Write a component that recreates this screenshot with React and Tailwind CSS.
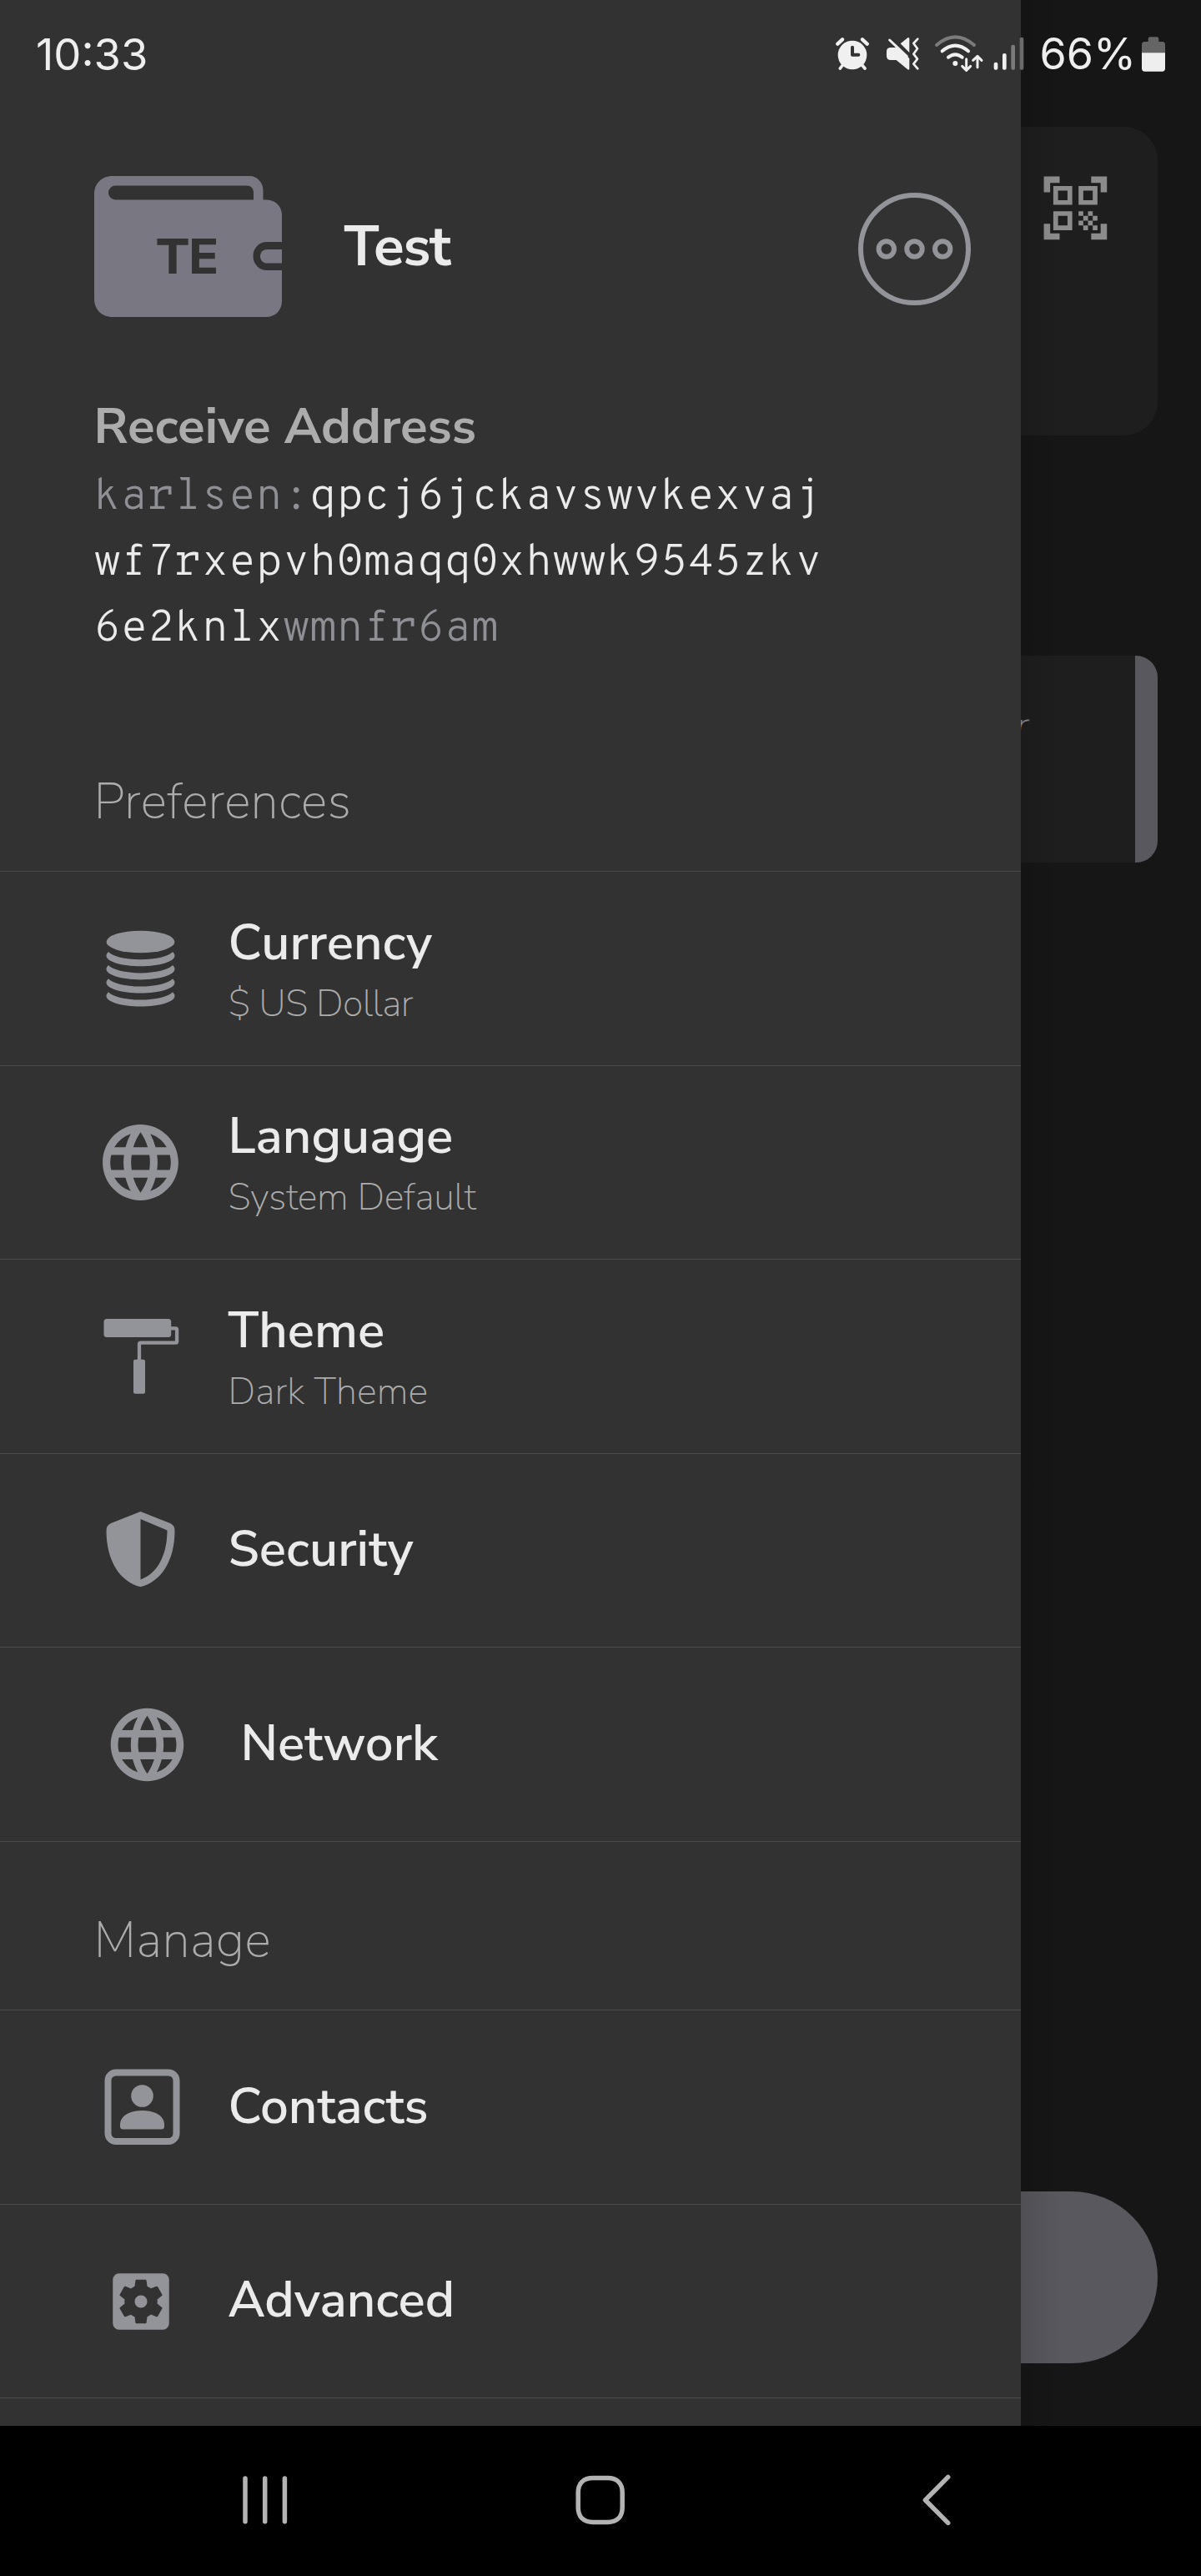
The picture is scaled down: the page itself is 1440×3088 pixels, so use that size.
import { MdLanguage, MdQrCodeScanner, MdSettingsApplications } from 'react-icons/md';

function WalletIcon() {
  return (
    <div className="relative flex h-[169px] w-[225px] shrink-0 items-center justify-center">
      <svg className="absolute inset-0" width="225" height="169" viewBox="0 0 225 169">
        <path
          fill="#797882"
          fillRule="evenodd"
          d="M22 0H186C195 0 202.500 7.500 202.500 17V28.500H206C217 28.500 225 36 225 47V79H207C197.500 79 190.500 86.500 190.500 96S197.500 113 207 113H225V150C225 161 217 169 206 169H22C9 169 0 160 0 147V22C0 9 9 0 22 0ZM25.500 11.500A8.500 8.500 0 0 0 25.500 28.500H191V20C191 15 188 11.500 183 11.500Z"
        />
        <path fill="#797882" d="M225 88H207.500C202.500 88 199 91.500 199 96.200S202.500 104.500 207.500 104.500H225Z" />
      </svg>
      <span className="relative pt-6 text-[60px] font-extrabold leading-[82px] text-[#323232]">TE</span>
    </div>
  );
}

function MoreButton() {
  return (
    <svg className="mt-1.5 shrink-0" width="135" height="135" viewBox="0 0 135 135" fill="none" stroke="#93939a" strokeWidth="6">
      <circle cx="67.500" cy="67.500" r="64.500" />
      <circle cx="33.800" cy="67.500" r="9.200" />
      <circle cx="67.500" cy="67.500" r="9.200" />
      <circle cx="101.200" cy="67.500" r="9.200" />
    </svg>
  );
}

function IconFrame({ children }) {
  return (
    <svg className="shrink-0" width="112.5" height="112.5" viewBox="0 0 112.5 112.5" fill="#93939a">
      {children}
    </svg>
  );
}

function CoinsIcon() {
  return (
    <IconFrame>
      <ellipse cx="55.500" cy="24" rx="41" ry="13.300" />
      {[0, 16.1, 32.2, 48.3].map((dy) => (
        <path
          key={dy}
          transform={`translate(0 ${dy})`}
          d="M17 36C14.500 38.500 14.500 40 14.500 40.500C14.500 48 33 53.300 55.500 53.300S96.500 48 96.500 40.500C96.500 40 96.500 38.500 94 36C89 41.500 74 45.300 55.500 45.300S22 41.500 17 36Z"
        />
      ))}
    </IconFrame>
  );
}

function RollerIcon() {
  return (
    <IconFrame>
      <rect x="11.500" y="11" width="80.700" height="22" rx="3.500" />
      <path d="M92 22.300H97.500Q99.100 22.300 99.100 24V38Q99.100 39.700 97.500 39.700H56Q54 39.700 54 41.500V60" fill="none" stroke="#93939a" strokeWidth="4.300" />
      <rect x="47" y="59.800" width="14" height="41" rx="2" />
    </IconFrame>
  );
}

function ShieldIcon() {
  return (
    <IconFrame>
      <path
        fillRule="evenodd"
        d="M55.500 10L91 24Q96.500 26.500 96.500 33C96.500 69 80 94.500 55.500 100.200C31 94.500 14.500 69 14.500 33Q14.500 26.500 20 24ZM55.500 19V91.500C75 85 87.500 63 87.500 32.500Z"
      />
    </IconFrame>
  );
}

function ContactsIcon() {
  return (
    <IconFrame>
      <rect x="16.500" y="14.500" width="82" height="82.500" rx="9.500" fill="none" stroke="#93939a" strokeWidth="8" />
      <circle cx="57.500" cy="42.500" r="13.300" />
      <path d="M31 77C31 66 43 60 57.500 60S84 66 84 77V79Q84 82.500 80.500 82.500H34.500Q31 82.500 31 79Z" />
    </IconFrame>
  );
}

const GlobeIcon = () => <MdLanguage className="size-[109px] shrink-0 text-[#93939a]" />;
const NetworkIcon = () => <MdLanguage className="size-[105px] shrink-0 text-[#93939a]" />;
const AdvancedIcon = () => <MdSettingsApplications className="size-[90px] shrink-0 text-[#93939a]" />;

const preferences = [
  { title: 'Currency', sub: '$ US Dollar', subTracking: 'tracking-[-0.6px]', Icon: CoinsIcon, h: 'h-[233px]' },
  { title: 'Language', sub: 'System Default', subTracking: 'tracking-[-0.25px]', Icon: GlobeIcon, h: 'h-[232px]' },
  { title: 'Theme', sub: 'Dark Theme', subTracking: 'tracking-[0.1px]', Icon: RollerIcon, h: 'h-[233px]' },
  { title: 'Security', Icon: ShieldIcon, h: 'h-[232px]' },
  { title: 'Network', Icon: NetworkIcon, h: 'h-[233px]', wide: true },
];

const manage = [
  { title: 'Contacts', Icon: ContactsIcon, h: 'h-[233px]' },
  { title: 'Advanced', Icon: AdvancedIcon, h: 'h-[232px]' },
];

function Row({ title, sub, subTracking, Icon, h, wide }) {
  return (
    <li className={`flex shrink-0 items-center gap-[48.5px] border-b border-[#4a4a4a] pl-[112.5px] ${h}`}>
      <div className={`flex justify-center ${wide ? 'w-[127.5px]' : 'w-[112.5px]'}`}>
        <Icon />
      </div>
      <div className={sub ? 'pt-px' : 'pb-[3px]'}>
        <p className="text-[60px] font-semibold leading-[82px] text-[#ebebeb]">{title}</p>
        {sub && <p className={`mt-0.5 text-[45px] font-extralight leading-[62px] text-[#acacac] ${subTracking}`}>{sub}</p>}
      </div>
    </li>
  );
}

function SectionTitle({ children, className }) {
  return (
    <h2 className={`shrink-0 border-b border-[#4a4a4a] pb-[42px] pl-[112.5px] text-[60px] font-extralight leading-[82px] tracking-[0.2px] text-[#acacac] ${className}`}>
      {children}
    </h2>
  );
}

function Drawer() {
  return (
    <aside className="absolute inset-y-0 left-0 flex w-[1224px] flex-col overflow-hidden bg-[#323232]">
      <header className="mt-[211px] flex h-[169px] shrink-0 items-center pl-[112.5px] pr-[60px]">
        <WalletIcon />
        <h1 className="ml-[75px] flex-1 text-[67.5px] font-bold leading-[92px] tracking-[-1.1px] text-[#ebebeb]">Test</h1>
        <MoreButton />
      </header>
      <section className="mt-[90px] h-[318px] shrink-0 pl-[112.5px]">
        <h2 className="text-[60px] font-bold leading-[82px] text-[#acacac]">Receive Address</h2>
        <p className="mt-1.5 font-['Overpass_Mono','Noto_Sans_Mono','DejaVu_Sans_Mono',monospace] text-[52.5px] font-light leading-[78.75px] text-[#ebebeb]">
          <span className="text-[#8f8f96]">karlsen:</span>qpcj6jckavswvkexvaj
          <br />
          wf7rxepvh0maqq0xhwwk9545zkv
          <br />
          6e2knlx<span className="text-[#8f8f96]">wmnfr6am</span>
        </p>
      </section>
      <SectionTitle className="mt-[132px]">Preferences</SectionTitle>
      <ul>
        {preferences.map((row) => (
          <Row key={row.title} {...row} />
        ))}
      </ul>
      <SectionTitle className="pt-[77px]">Manage</SectionTitle>
      <ul>
        {manage.map((row) => (
          <Row key={row.title} {...row} />
        ))}
      </ul>
    </aside>
  );
}

function HomeBehind() {
  return (
    <div className="flex h-full flex-col pr-[52.5px]">
      <div className="mt-[152px] flex h-[370px] justify-end rounded-[40px] bg-[#1e1e1e] pr-[52.5px] pt-[52px]">
        <MdQrCodeScanner className="size-[90.8px] text-[#8c8c8c]" />
      </div>
      <div className="mt-[264px] flex h-[248px] justify-end overflow-hidden rounded-[26px] bg-[#1e1e1e]">
        <span className="mr-[128px] mt-[55px] text-[45px] font-extralight italic leading-[60px] text-[#8c8c8c]">r</span>
        <div className="w-[26.500px] bg-[#59585e]" />
      </div>
      <div className="mt-[1592.500px] h-[206.500px] rounded-full bg-[#59585e]" />
    </div>
  );
}

function StatusIcons() {
  return (
    <svg width="227.333" height="90" viewBox="60 0 682 270" fill="#f0f0f0" stroke="#f0f0f0" strokeLinecap="round" strokeLinejoin="round" strokeWidth="0">
      <circle cx="126" cy="138" r="52" />
      <path d="M73 98L90 82M162 82L179 98" strokeWidth="13" />
      <path d="M91 174L82 186M161 174L171 186" strokeWidth="11" />
      <path d="M126 110V137H148" fill="none" stroke="#323232" strokeWidth="12" />
      <path d="M264 111Q249 111 249 125V141Q249 156 264 156H284L325 190Q331 193 331 186V150L288 111Z" />
      <path d="M260 84L322 143" strokeWidth="9" />
      <path d="M299 97L325 76Q331 72 331 80V129Z" />
      <path d="M361 80L346 96L360 115L346 134L360 152L346 170L361 187" fill="none" strokeWidth="8" />
      <g fill="none" strokeWidth="12">
        <path d="M429 102Q496 44 564 102" stroke="#7c7c7c" />
        <path d="M449 124Q496 84 543 124" />
        <path d="M471 146Q496 126 521 146" />
      </g>
      <circle cx="496" cy="168" r="9" />
      <path d="M536 152V192M521 178L536 193L551 178M576 182V144M560 157L576 142L591 157" fill="none" strokeWidth="9" />
      <rect x="635" y="164" width="14" height="27" rx="6" />
      <rect x="666" y="132" width="14" height="59" rx="6" />
      <rect x="697" y="101" width="14" height="90" rx="6" fill="#7a7a7a" />
      <rect x="728" y="74" width="14" height="117" rx="6" fill="#6a6a6a" />
    </svg>
  );
}

function StatusBar() {
  return (
    <div className="absolute inset-x-0 top-0 flex h-[130px] items-center justify-between px-[43px] text-[#eeeeee]">
      <span className="font-['Inter',sans-serif] text-[52.5px] leading-none">10:33</span>
      <div className="flex items-center">
        <StatusIcons />
        <span className="ml-[19px] w-[116px] whitespace-nowrap font-['Inter',sans-serif] text-[52px] leading-none">66%</span>
        <svg width="28" height="42" viewBox="0 0 84 126" className="ml-[6.500px]">
          <path d="M23 8Q23 1 30 1H54Q61 1 61 8V18H74Q84 18 84 29V59H0V29Q0 18 10 18H23Z" fill="#656565" />
          <path d="M0 58H84V114Q84 125 73 125H11Q0 125 0 114Z" fill="#eeeeee" />
        </svg>
      </div>
    </div>
  );
}

function NavBar() {
  return (
    <nav className="flex h-[180px] items-center bg-black pb-[3px] pl-[291px] pr-[299px]">
      <svg width="850" height="62" viewBox="0 0 850 62" fill="none" stroke="#b3b3b3" strokeWidth="5.500" strokeLinecap="round" strokeLinejoin="round">
        <path d="M3 5V56.800M26.700 5V56.800M50.400 5V56.800" />
        <path d="M420 4.400H437.500C449 4.400 455.200 11 455.200 22V40C455.200 51 449 57.400 437.500 57.400H420C408.500 57.400 402.200 51 402.200 40V22C402.200 11 408.500 4.400 420 4.400Z" />
        <path d="M845.700 3.400L818.400 31L845.700 58.400" />
      </svg>
    </nav>
  );
}

export default function App() {
  return (
    <div className="relative flex h-[3088px] w-[1440px] flex-col overflow-hidden bg-[#161616] font-['Nunito_Sans','Nunito',sans-serif] antialiased">
      <main className="relative h-[2908px] overflow-hidden">
        <HomeBehind />
        <div className="absolute inset-y-0 left-[1224px] w-12 bg-linear-to-r from-black/10 to-transparent" />
        <Drawer />
      </main>
      <NavBar />
      <StatusBar />
    </div>
  );
}
